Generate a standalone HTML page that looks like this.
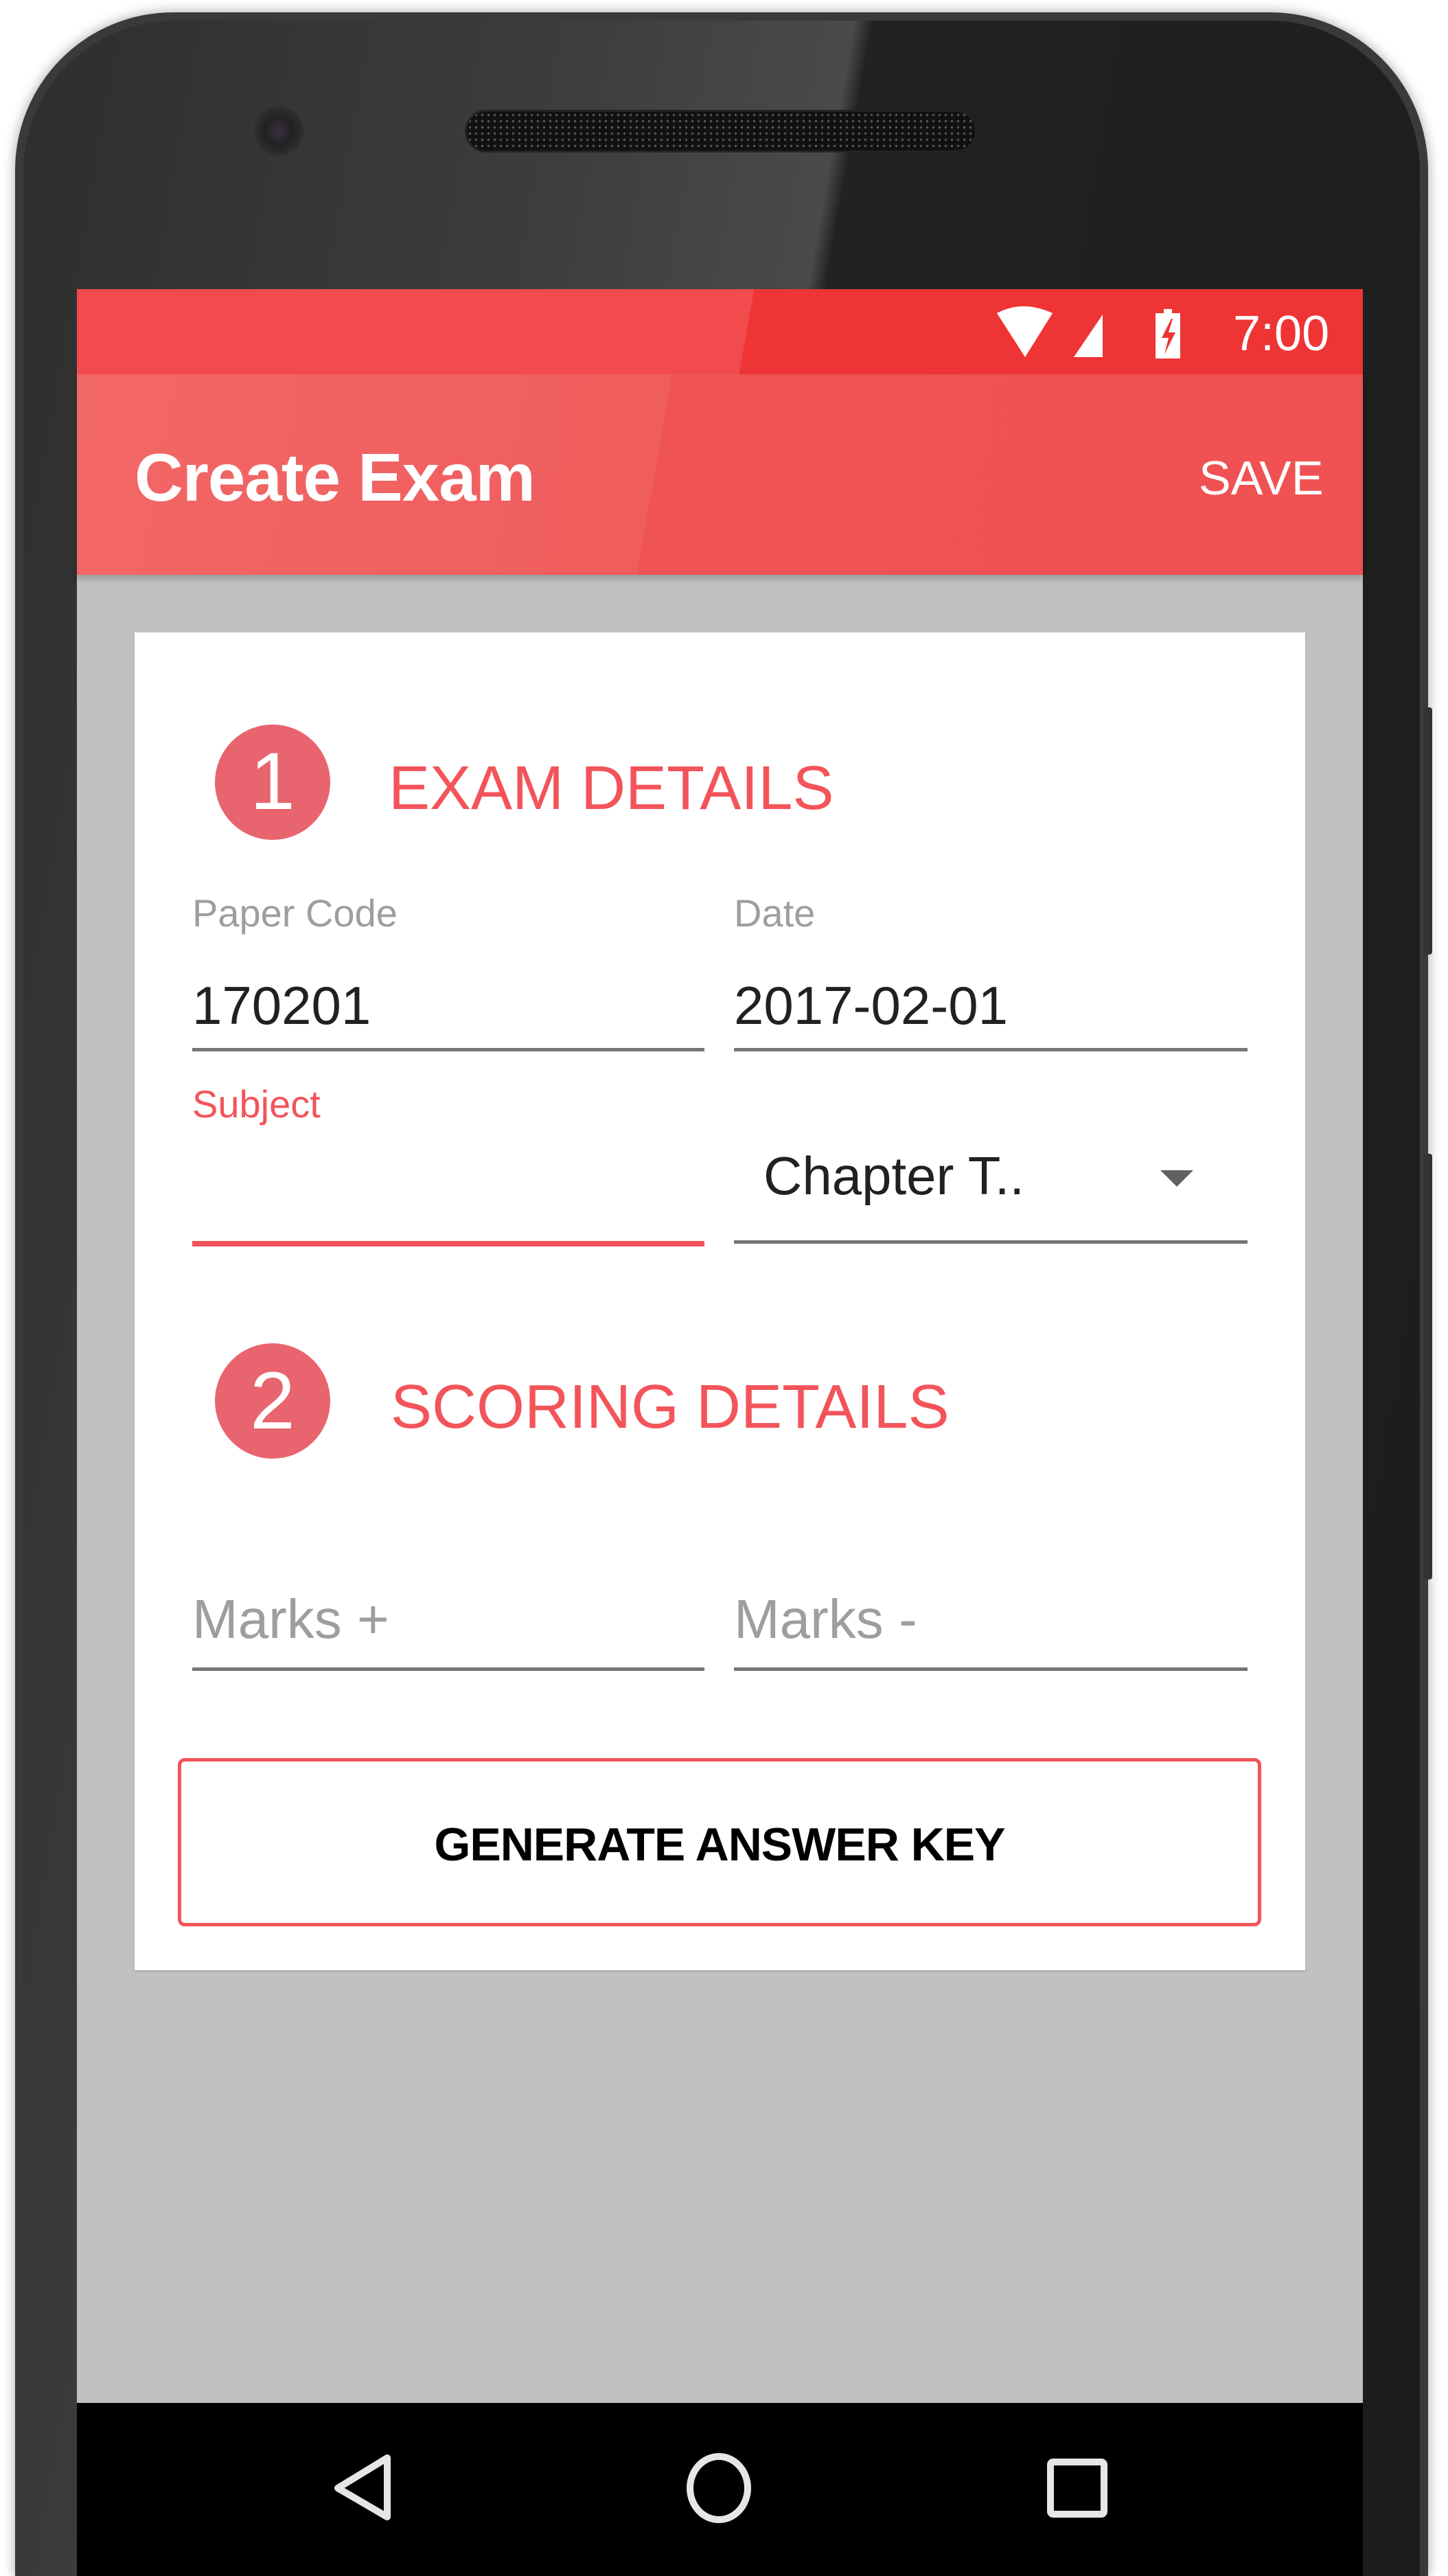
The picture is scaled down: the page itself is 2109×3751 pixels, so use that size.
<!DOCTYPE html>
<html style="width:2109px;height:3751px;overflow:hidden"><head><meta charset="utf-8"><style>
*{margin:0;padding:0;box-sizing:border-box}
body{width:2109px;height:3751px;background:#fff;position:relative;overflow:hidden;font-family:"Liberation Sans",Arial,sans-serif}
.a{position:absolute}
.t{position:absolute;white-space:nowrap}
</style></head><body>
<!-- phone body -->
<div class="a" style="left:22px;top:18px;width:2058px;height:3733px;border-radius:230px 230px 0 0;background:#3a3a3a;box-shadow:0 0 18px rgba(0,0,0,.35)"></div>
<div class="a" style="left:34px;top:30px;width:2034px;height:3721px;border-radius:220px 220px 0 0;background:linear-gradient(100deg,#2e2e2e 0%,#3d3d3d 30%,#4a4a4a 45%,#222 46%,#1c1c1c 100%)"></div>
<!-- side buttons -->
<div class="a" style="left:2074px;top:1030px;width:12px;height:360px;background:#333;border-radius:4px"></div>
<div class="a" style="left:2074px;top:1680px;width:12px;height:620px;background:#333;border-radius:4px"></div>
<!-- speaker & camera -->
<div class="a" style="left:677px;top:160px;width:746px;height:62px;border-radius:31px;background:#111;background-image:radial-gradient(#555 1.5px,transparent 2px);background-size:9px 9px;border:3px solid #222"></div>
<div class="a" style="left:370px;top:155px;width:72px;height:72px;border-radius:50%;background:radial-gradient(circle,#3a3040 0,#222 40%,#2f2f2f 70%,#3a3a3a 100%)"></div>
<!-- screen -->
<div class="a" style="left:112px;top:421px;width:1873px;height:3330px;background:#c1c1c1"></div>
<!-- status bar -->
<div class="a" style="left:112px;top:421px;width:1873px;height:124px;background:linear-gradient(100deg,#f24b4e 0%,#f24b4e 52%,#ee3435 52.1%,#ee3435 100%)"></div>
<svg class="a" style="left:1440px;top:440px" width="440" height="90" viewBox="0 0 440 90">
<path d="M12 16 Q50 -4 93 16 L53 80 Z" fill="#fff"/>
<path d="M166 18 L166 80 L124 80 Z" fill="#fff"/>
<rect x="255" y="10" width="12" height="8" fill="#fff"/>
<rect x="243" y="16" width="36" height="66" fill="#fff"/>
<path d="M266 24 L252 52 L262 52 L256 76 L272 44 L262 44 L268 24Z" fill="#ee3435"/>
</svg>
<div class="t" style="left:1796px;top:446px;font-size:72px;line-height:80px;color:#fff">7:00</div>
<!-- app bar -->
<div class="a" style="left:112px;top:545px;width:1873px;height:292px;background:linear-gradient(100deg,#f26767 0%,#f05d5d 45%,#ef5353 45.1%,#f05253 100%);box-shadow:0 6px 8px rgba(0,0,0,.2)"></div>
<div class="t" style="left:196px;top:640px;font-size:98px;line-height:110px;color:#fff;font-weight:bold;letter-spacing:-1px">Create Exam</div>
<div class="t" style="left:1746px;top:656px;font-size:70px;line-height:80px;color:#fff">SAVE</div>
<!-- card -->
<div class="a" style="left:196px;top:921px;width:1705px;height:1948px;background:#fff;box-shadow:0 2px 3px rgba(0,0,0,.15)"></div>
<div class="a" style="left:313px;top:1055px;width:168px;height:168px;border-radius:50%;background:#e8646e"></div>
<div class="t" style="left:313px;top:1078px;width:168px;text-align:center;font-size:118px;line-height:120px;color:#fff">1</div>
<div class="t" style="left:566px;top:1098px;font-size:90px;line-height:100px;color:#f2545a">EXAM DETAILS</div>
<div class="t" style="left:280px;top:1300px;font-size:56px;line-height:60px;color:#9e9e9e">Paper Code</div>
<div class="t" style="left:1069px;top:1300px;font-size:56px;line-height:60px;color:#9e9e9e">Date</div>
<div class="t" style="left:280px;top:1422px;font-size:78px;line-height:84px;color:#212121">170201</div>
<div class="t" style="left:1069px;top:1422px;font-size:78px;line-height:84px;color:#212121">2017-02-01</div>
<div class="a" style="left:280px;top:1526px;width:746px;height:5px;background:#757575"></div>
<div class="a" style="left:1069px;top:1526px;width:748px;height:5px;background:#757575"></div>
<div class="t" style="left:280px;top:1578px;font-size:56px;line-height:60px;color:#f2545a">Subject</div>
<div class="a" style="left:280px;top:1807px;width:746px;height:8px;background:#f2545a"></div>
<div class="t" style="left:1112px;top:1670px;font-size:78px;line-height:84px;color:#212121">Chapter T..</div>
<svg class="a" style="left:1688px;top:1702px" width="52" height="28"><path d="M2 2 L50 2 L26 26Z" fill="#616161"/></svg>
<div class="a" style="left:1069px;top:1806px;width:748px;height:5px;background:#757575"></div>
<div class="a" style="left:313px;top:1956px;width:168px;height:168px;border-radius:50%;background:#e8646e"></div>
<div class="t" style="left:313px;top:1980px;width:168px;text-align:center;font-size:118px;line-height:120px;color:#fff">2</div>
<div class="t" style="left:569px;top:1999px;font-size:90px;line-height:100px;color:#f2545a">SCORING DETAILS</div>
<div class="t" style="left:280px;top:2314px;font-size:80px;line-height:88px;color:#9e9e9e">Marks +</div>
<div class="t" style="left:1069px;top:2314px;font-size:80px;line-height:88px;color:#9e9e9e">Marks -</div>
<div class="a" style="left:280px;top:2428px;width:746px;height:5px;background:#757575"></div>
<div class="a" style="left:1069px;top:2428px;width:748px;height:5px;background:#757575"></div>
<div class="a" style="left:259px;top:2560px;width:1578px;height:245px;border:5px solid #f2545a;border-radius:10px"></div>
<div class="t" style="left:259px;top:2646px;width:1578px;text-align:center;font-size:68px;line-height:80px;font-weight:bold;color:#000;letter-spacing:-1px">GENERATE ANSWER KEY</div>
<!-- nav bar -->
<div class="a" style="left:112px;top:3499px;width:1873px;height:252px;background:#000"></div>
<svg class="a" style="left:112px;top:3499px" width="1873" height="252">
<path d="M452 80 L452 166 L380 124 Z" fill="none" stroke="#e6e6e6" stroke-width="10" stroke-linejoin="round"/>
<ellipse cx="935" cy="124" rx="42" ry="46" fill="none" stroke="#e6e6e6" stroke-width="10"/>
<rect x="1418" y="86" width="78" height="76" rx="4" fill="none" stroke="#e6e6e6" stroke-width="10"/>
</svg>
</body></html>
